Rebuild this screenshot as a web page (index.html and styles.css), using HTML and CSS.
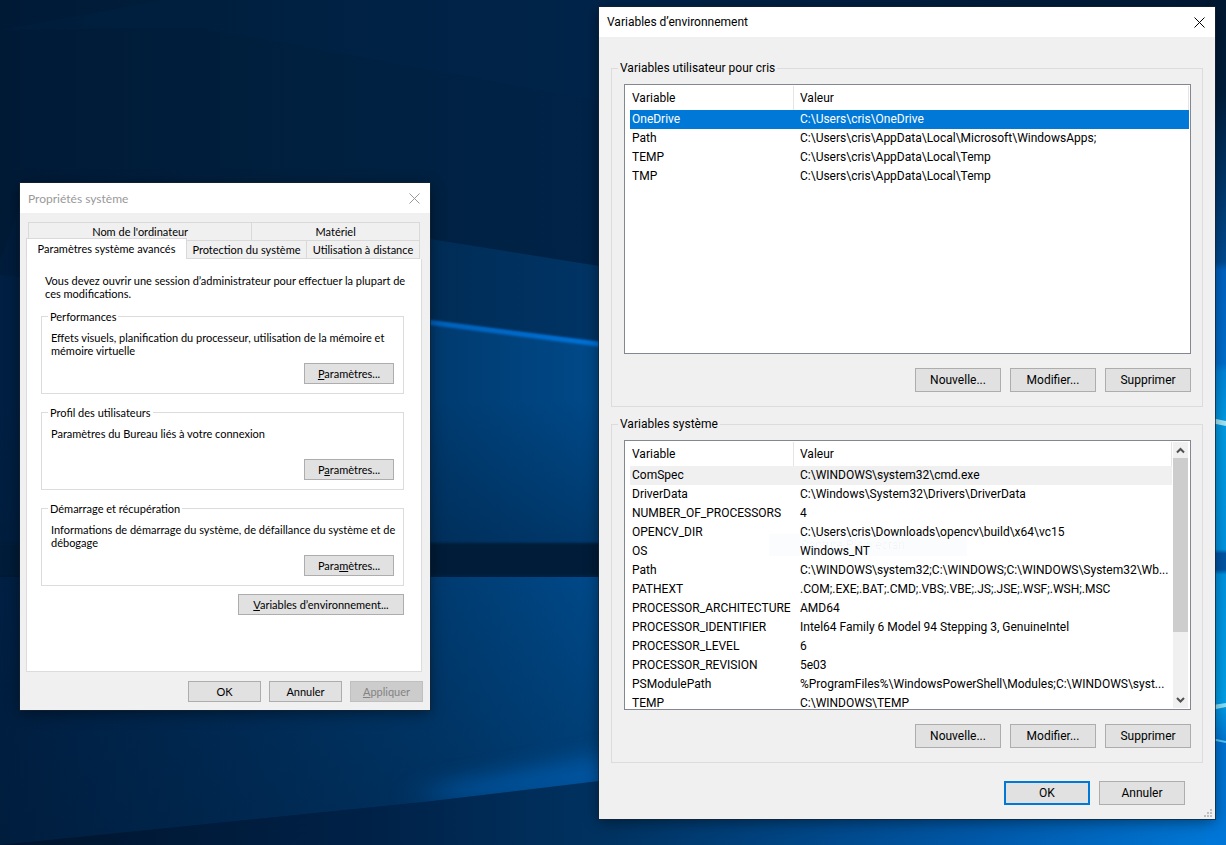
FILE: index.html
```html
<!DOCTYPE html>
<html lang="fr">
<head>
    <meta charset="UTF-8">
    <meta name="viewport" content="width=device-width, initial-scale=1.0">
    <title>Variables d’environnement</title>
    <link rel="stylesheet" href="styles.css">
</head>
<body>
    <div class="desktop">
        <svg class="wallpaper" viewBox="0 0 1226 845" preserveAspectRatio="none" aria-hidden="true">
            <defs>
                <linearGradient id="sky" x1="0" y1="0" x2="1" y2="0">
                    <stop offset="0" stop-color="#001a36"/>
                    <stop offset="0.25" stop-color="#00203f"/>
                    <stop offset="0.5" stop-color="#002348"/>
                    <stop offset="1" stop-color="#001a36"/>
                </linearGradient>
                <linearGradient id="beam" gradientUnits="userSpaceOnUse" x1="0" y1="0" x2="1226" y2="0">
                    <stop offset="0" stop-color="#001f42"/>
                    <stop offset="0.2" stop-color="#002d5a"/>
                    <stop offset="0.36" stop-color="#003b70"/>
                    <stop offset="0.5" stop-color="#004b8c"/>
                    <stop offset="1" stop-color="#0078d0"/>
                </linearGradient>
                <linearGradient id="low" x1="0" y1="0" x2="1" y2="0">
                    <stop offset="0" stop-color="#00142c"/>
                    <stop offset="0.3" stop-color="#002147"/>
                    <stop offset="0.5" stop-color="#003362"/>
                    <stop offset="0.8" stop-color="#0058a8"/>
                    <stop offset="1" stop-color="#0078d8"/>
                </linearGradient>
                <linearGradient id="ray" gradientUnits="userSpaceOnUse" x1="0" y1="0" x2="620" y2="0">
                    <stop offset="0" stop-color="#004a90" stop-opacity="0"/>
                    <stop offset="0.68" stop-color="#0060b8"/>
                    <stop offset="1" stop-color="#0074dc"/>
                </linearGradient>
                <linearGradient id="shade" x1="0" y1="0" x2="0" y2="1">
                    <stop offset="0" stop-color="#001a36" stop-opacity="0"/>
                    <stop offset="1" stop-color="#001a36" stop-opacity="0.35"/>
                </linearGradient>
                <linearGradient id="edge" x1="0" y1="0" x2="0" y2="1">
                    <stop offset="0" stop-color="#001832"/>
                    <stop offset="0.11" stop-color="#001d3c"/>
                    <stop offset="0.31" stop-color="#004c92"/>
                    <stop offset="0.32" stop-color="#0064c4"/>
                    <stop offset="0.43" stop-color="#0070d0"/>
                    <stop offset="0.44" stop-color="#0086dc"/>
                    <stop offset="0.5" stop-color="#009ce6"/>
                    <stop offset="0.65" stop-color="#0096e4"/>
                    <stop offset="0.655" stop-color="#0056a6"/>
                    <stop offset="0.674" stop-color="#0056a6"/>
                    <stop offset="0.68" stop-color="#0096e4"/>
                    <stop offset="0.83" stop-color="#00a0ea"/>
                    <stop offset="0.88" stop-color="#0074d4"/>
                    <stop offset="1" stop-color="#0076d8"/>
                </linearGradient>
                <filter id="soft" x="-5%" y="-50%" width="110%" height="200%">
                    <feGaussianBlur stdDeviation="0 1"/>
                </filter>
                <filter id="glow" x="-20%" y="-100%" width="140%" height="300%">
                    <feGaussianBlur stdDeviation="20 10"/>
                </filter>
            </defs>
            <rect width="1226" height="845" fill="url(#sky)"/>
            <polygon points="0,30 160,0 700,0 700,120 200,28" fill="#003060" opacity="0.1"/>
            <polygon points="0,262 20,205 200,212 430,239 599,266 599,560 0,560" fill="url(#beam)" opacity="0.45"/>
            <polygon points="0,275 430,320 599,342 720,356 720,543 0,543" fill="url(#beam)"/>
            <polygon points="0,272 430,320 720,357 720,362 430,325" fill="url(#ray)" filter="url(#soft)"/>
            <polygon points="0,400 720,400 720,543 0,543" fill="url(#shade)"/>
            <polygon points="0,543 720,543 720,575 0,575" fill="#001a38" filter="url(#soft)"/>
            <polygon points="0,577 720,577 720,768 424,802 0,845" fill="url(#beam)"/>
            <polygon points="0,577 720,577 720,768 424,802 0,845" fill="url(#shade)"/>
            <polygon points="440,785 599,755 720,735 720,790 424,802" fill="#0064bc" opacity="0.6" filter="url(#glow)"/>
            <polygon points="0,845 424,802 599,781 720,768 1226,768 1226,845" fill="url(#low)"/>
            <rect x="1206" width="20" height="845" fill="url(#edge)"/>
            <polygon points="1206,417 1226,421 1226,426 1206,422" fill="#a8e8f8"/>
            <polygon points="1206,706 1226,703 1226,707 1206,711" fill="#8ce4fc"/>
            <polyline points="1206,738 1226,742" stroke="#5cc8f4" stroke-width="2"/>
        </svg>

        <section class="window props" aria-label="Propriétés système">
            <div class="titlebar inactive">
                <span>Propriétés système</span>
                <button class="close" aria-label="Fermer">
                    <svg width="11" height="11" viewBox="0 0 11 11"><path d="M0.5 0.5L10.5 10.5M10.5 0.5L0.5 10.5" stroke="currentColor" fill="none"/></svg>
                </button>
            </div>
            <div class="tabs" role="tablist">
                <div class="tab-row">
                    <button class="tab tab-name" role="tab">Nom de l'ordinateur</button>
                    <button class="tab tab-hardware" role="tab">Matériel</button>
                </div>
                <div class="tab-row tab-row-front">
                    <button class="tab active" role="tab" aria-selected="true">Paramètres système avancés</button>
                    <button class="tab tab-protect" role="tab">Protection du système</button>
                    <button class="tab tab-remote" role="tab">Utilisation à distance</button>
                </div>
            </div>
            <div class="panel" role="tabpanel">
                <p class="intro">Vous devez ouvrir une session d’administrateur pour effectuer la plupart de ces modifications.</p>
                <fieldset class="group">
                    <legend>Performances</legend>
                    <p>Effets visuels, planification du processeur, utilisation de la mémoire et mémoire virtuelle</p>
                    <button class="btn small"><u>P</u>aramètres...</button>
                </fieldset>
                <fieldset class="group">
                    <legend>Profil des utilisateurs</legend>
                    <p>Paramètres du Bureau liés à votre connexion</p>
                    <button class="btn small">P<u>a</u>ramètres...</button>
                </fieldset>
                <fieldset class="group">
                    <legend>Démarrage et récupération</legend>
                    <p>Informations de démarrage du système, de défaillance du système et de débogage</p>
                    <button class="btn small">Para<u>m</u>ètres...</button>
                </fieldset>
                <button class="btn small env-button"><u>V</u>ariables d’environnement...</button>
            </div>
            <div class="actions">
                <button class="btn small">OK</button>
                <button class="btn small">Annuler</button>
                <button class="btn small" disabled><u>A</u>ppliquer</button>
            </div>
        </section>

        <section class="window env" aria-label="Variables d’environnement">
            <div class="titlebar">
                <span>Variables d’environnement</span>
                <button class="close" aria-label="Fermer">
                    <svg width="11" height="11" viewBox="0 0 11 11"><path d="M0.5 0.5L10.5 10.5M10.5 0.5L0.5 10.5" stroke="currentColor" fill="none"/></svg>
                </button>
            </div>
            <div class="env-body">
                <fieldset class="vars">
                    <legend>Variables utilisateur pour cris</legend>
                    <div class="list">
                        <table>
                            <thead>
                                <tr><th class="col-name">Variable</th><th>Valeur</th></tr>
                            </thead>
                            <tbody>
                                <tr class="selected"><td>OneDrive</td><td>C:\Users\cris\OneDrive</td></tr>
                                <tr><td>Path</td><td>C:\Users\cris\AppData\Local\Microsoft\WindowsApps;</td></tr>
                                <tr><td>TEMP</td><td>C:\Users\cris\AppData\Local\Temp</td></tr>
                                <tr><td>TMP</td><td>C:\Users\cris\AppData\Local\Temp</td></tr>
                            </tbody>
                        </table>
                    </div>
                    <div class="buttons">
                        <button class="btn">Nouvelle...</button>
                        <button class="btn">Modifier...</button>
                        <button class="btn">Supprimer</button>
                    </div>
                </fieldset>
                <fieldset class="vars">
                    <legend>Variables système</legend>
                    <div class="list">
                        <table>
                            <thead>
                                <tr><th class="col-name">Variable</th><th>Valeur</th></tr>
                            </thead>
                            <tbody>
                                <tr class="hot"><td>ComSpec</td><td>C:\WINDOWS\system32\cmd.exe</td></tr>
                                <tr><td>DriverData</td><td>C:\Windows\System32\Drivers\DriverData</td></tr>
                                <tr><td>NUMBER_OF_PROCESSORS</td><td>4</td></tr>
                                <tr><td>OPENCV_DIR</td><td>C:\Users\cris\Downloads\opencv\build\x64\vc15</td></tr>
                                <tr><td>OS</td><td>Windows_NT</td></tr>
                                <tr><td>Path</td><td>C:\WINDOWS\system32;C:\WINDOWS;C:\WINDOWS\System32\Wb...</td></tr>
                                <tr><td>PATHEXT</td><td>.COM;.EXE;.BAT;.CMD;.VBS;.VBE;.JS;.JSE;.WSF;.WSH;.MSC</td></tr>
                                <tr><td>PROCESSOR_ARCHITECTURE</td><td>AMD64</td></tr>
                                <tr><td>PROCESSOR_IDENTIFIER</td><td>Intel64 Family 6 Model 94 Stepping 3, GenuineIntel</td></tr>
                                <tr><td>PROCESSOR_LEVEL</td><td>6</td></tr>
                                <tr><td>PROCESSOR_REVISION</td><td>5e03</td></tr>
                                <tr><td>PSModulePath</td><td>%ProgramFiles%\WindowsPowerShell\Modules;C:\WINDOWS\syst...</td></tr>
                                <tr><td>TEMP</td><td>C:\WINDOWS\TEMP</td></tr>
                            </tbody>
                        </table>
                        <div class="scrollbar">
                            <svg width="15" height="16" viewBox="0 0 15 16"><path d="M4 10.5L7.5 7L11 10.5" stroke="#505050" stroke-width="2" fill="none"/></svg>
                            <div class="thumb"></div>
                            <svg class="down" width="15" height="16" viewBox="0 0 15 16"><path d="M4 6L7.5 9.5L11 6" stroke="#505050" stroke-width="2" fill="none"/></svg>
                        </div>
                        <div class="fading-menu" aria-hidden="true">Capture Plein écran</div>
                    </div>
                    <div class="buttons">
                        <button class="btn">Nouvelle...</button>
                        <button class="btn">Modifier...</button>
                        <button class="btn">Supprimer</button>
                    </div>
                </fieldset>
                <div class="buttons dialog-buttons">
                    <button class="btn default">OK</button>
                    <button class="btn">Annuler</button>
                </div>
            </div>
            <svg class="grip" width="8" height="8" viewBox="0 0 8 8" aria-hidden="true">
                <path d="M6 0h2v2h-2zM3 3h2v2h-2zM6 3h2v2h-2zM0 6h2v2h-2zM3 6h2v2h-2zM6 6h2v2h-2z" fill="#bfbfbf"/>
            </svg>
        </section>
    </div>
</body>
</html>
```
FILE: styles.css
```css
* {
    box-sizing: border-box;
}

body {
    margin: 0;
    font-family: Roboto, "Open Sans", sans-serif;
    font-size: 12px;
    line-height: 16px;
    color: #000;
}

p {
    margin: 0;
}

button {
    font: inherit;
    color: inherit;
}

.desktop {
    position: relative;
    min-height: 100vh;
    overflow: hidden;
    background-color: #001f42;
}

.wallpaper {
    position: absolute;
    width: 100%;
    height: 100%;
}

/* windows */
.window {
    position: absolute;
    background-color: #f0f0f0;
    box-shadow: 0 0 0 1px rgba(20, 35, 50, 0.7), 0 3px 14px rgba(0, 0, 0, 0.45);
}

.titlebar {
    display: flex;
    justify-content: space-between;
    align-items: center;
    height: 30px;
    padding: 0 10px 0 8px;
    background-color: #fff;
}

.titlebar.inactive {
    color: #999;
}

.close {
    display: flex;
    padding: 0;
    border: none;
    background: none;
}

.btn {
    width: 86px;
    height: 24px;
    padding: 0;
    border: 1px solid #adadad;
    background-color: #e1e1e1;
    text-align: center;
}

.btn.default {
    border: 2px solid #0078d7;
}

.btn:disabled {
    border-color: #bfbfbf;
    background-color: #ccc;
    color: #838383;
}

.btn.small {
    width: 90px;
    height: 21px;
}

fieldset {
    display: flex;
    flex-direction: column;
    min-width: 0;
    margin: 0;
    border: 1px solid #dcdcdc;
}

/* system properties */
.props {
    left: 20px;
    top: 183px;
    width: 410px;
    padding-bottom: 8px;
    font-family: Lato, "Open Sans", sans-serif;
    font-size: 11px;
    line-height: 13px;
}

.props .titlebar {
    font-size: 12px;
}

.tabs {
    padding: 9px 10px 0 8px;
}

.tab-row {
    display: flex;
    height: 18px;
}

.tab {
    flex: 1;
    padding: 0;
    border: 1px solid #d9d9d9;
    border-width: 1px 1px 0 0;
    background-color: #f0f0f0;
    white-space: nowrap;
}

.tab-name {
    flex: 4;
    border-left-width: 1px;
}

.tab-hardware {
    flex: 3;
}

.tab-row-front {
    height: 19px;
    margin-left: -2px;
}

.tab.active {
    flex: none;
    width: 161px;
    margin-top: -2px;
    padding-bottom: 2px;
    border-left-width: 1px;
    background-color: #fff;
}

.tab-protect {
    flex: 120;
}

.tab-remote {
    flex: 113;
}

.tab-row-front .tab:not(.active) {
    border-bottom-width: 1px;
}

.panel {
    display: flex;
    flex-direction: column;
    gap: 12px;
    margin: 0 8px 9px 6px;
    padding: 15px 17px 56px 14px;
    border: 1px solid #dcdcdc;
    border-top: none;
    background-color: #fff;
}

.intro {
    padding-left: 4px;
    margin: 0 -8px -2px 0;
}

.group {
    padding: 8px 9px 9px;
}

.group legend {
    padding: 0 2px;
    margin-left: -3px;
}

.group p {
    min-height: 26px;
    margin-right: -8px;
}

.group .btn {
    margin-top: 6px;
    align-self: flex-end;
}

.panel .env-button {
    width: 166px;
    align-self: flex-end;
    margin-top: -4px;
}

.actions {
    display: flex;
    justify-content: flex-end;
    gap: 8px;
    padding-right: 7px;
}

.actions .btn {
    width: 73px;
}

/* environment variables */
.env {
    left: 599px;
    right: 11px;
    top: 7px;
}

.env-body {
    display: flex;
    flex-direction: column;
    gap: 9px;
    padding: 23px 12px 14px;
}

.vars {
    padding: 8px 11px 14px 12px;
}

.vars legend {
    padding: 0 2px;
    margin-left: -6px;
}

.list {
    position: relative;
    display: flex;
    align-items: flex-start;
    height: 270px;
    padding: 1px 1px 0 5px;
    border: 1px solid #828790;
    background-color: #fff;
    overflow: hidden;
}

.list table {
    flex: 1;
    width: 100%;
    min-width: 0;
    table-layout: fixed;
    border-collapse: separate;
    border-spacing: 0;
    line-height: 19px;
    white-space: nowrap;
}

.list th {
    height: 24px;
    padding: 0 0 0 6px;
    border-right: 1px solid #e5e5e5;
    font-weight: normal;
    text-align: left;
}

.list th.col-name {
    width: 164px;
    padding-left: 2px;
}

.list td {
    padding: 0 0 0 6px;
}

.list td:first-child {
    padding-left: 2px;
}

.selected {
    background-color: #0078d7;
    color: #fff;
}

.hot {
    background-color: #f0f0f0;
}

.scrollbar {
    display: flex;
    flex: none;
    flex-direction: column;
    width: 17px;
    height: 266px;
    border: solid #fff;
    border-width: 0 1px;
    background-color: #f0f0f0;
}

.scrollbar .thumb {
    height: 174px;
    background-color: #cdcdcd;
}

.scrollbar .down {
    margin-top: auto;
}

/* menu at the end of its fade out */
.fading-menu {
    position: absolute;
    left: 144px;
    top: 93px;
    width: 198px;
    padding: 3px 32px;
    background-color: rgba(0, 90, 200, 0.015);
    color: rgba(0, 0, 0, 0.04);
}

.buttons {
    display: flex;
    justify-content: flex-end;
    gap: 9px;
    margin-top: 14px;
}

.dialog-buttons {
    margin-top: 9px;
    padding-right: 18px;
}

.grip {
    position: absolute;
    right: 3px;
    bottom: 2px;
}
```
